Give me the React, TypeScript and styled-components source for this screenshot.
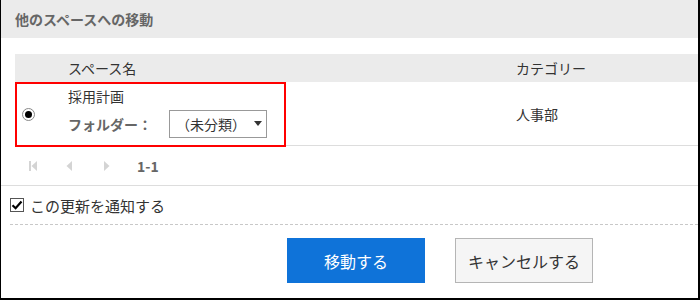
import React from "react";
import styled, { createGlobalStyle } from "styled-components";

const GlobalStyle = createGlobalStyle`
  * { box-sizing: border-box; }
  body {
    margin: 0;
    background: #fff;
    font-family: "Noto Sans CJK JP", "Noto Sans", sans-serif;
    color: #333;
  }
`;

const Frame = styled.div`
  width: 700px;
  height: 300px;
  border-left: 1px solid #000;
  border-right: 2px solid #000;
  border-bottom: 2px solid #000;
  background: #fff;
  display: flex;
  flex-direction: column;
`;

const Header = styled.h2`
  margin: 0;
  height: 38px;
  line-height: 38px;
  padding-left: 14px;
  background: #ebebeb;
  color: #666;
  font-size: 14px;
  font-weight: 700;
`;

const TableArea = styled.div`
  padding: 16px 0 0 14px;
`;

const Row = styled.div<{ $head?: boolean }>`
  position: relative;
  display: grid;
  grid-template-columns: 53px 448px 1fr;
  align-items: center;
  height: ${(p) => (p.$head ? "28px" : "64px")};
  background: ${(p) => (p.$head ? "#ebebeb" : "#fff")};
  border-bottom: ${(p) => (p.$head ? "none" : "1px solid #ddd")};
  font-size: 14px;
  color: #333;
`;

const Highlight = styled.div`
  position: absolute;
  left: 0;
  top: 0;
  width: 271px;
  height: 65px;
  border: 2px solid #f00;
  pointer-events: none;
`;

const RadioCell = styled.div`
  display: flex;
  padding-left: 7px;
  padding-top: 2px;
`;

const Radio = styled.span`
  width: 13px;
  height: 13px;
  border-radius: 50%;
  border: 1px solid #888;
  display: flex;
  align-items: center;
  justify-content: center;
  &::after {
    content: "";
    width: 7px;
    height: 7px;
    border-radius: 50%;
    background: #000;
  }
`;

const NameCell = styled.div`
  display: flex;
  flex-direction: column;
  gap: 4px;
  padding-bottom: 4px;
`;

const SpaceName = styled.div`
  font-size: 14px;
  line-height: 20px;
`;

const FolderLine = styled.div`
  display: flex;
  align-items: center;
`;

const FolderLabel = styled.span`
  font-weight: 700;
  color: #666;
  font-size: 14px;
  width: 101px;
`;

const Select = styled.div`
  width: 98px;
  height: 28px;
  border: 1px solid #999;
  display: flex;
  align-items: center;
  padding-left: 6px;
  gap: 8px;
  font-size: 14px;
  color: #333;
`;

const Caret = styled.span`
  width: 0;
  height: 0;
  border-left: 4px solid transparent;
  border-right: 4px solid transparent;
  border-top: 5px solid #333;
`;

const Pager = styled.div`
  display: flex;
  align-items: center;
  height: 39px;
  padding-left: 27px;
`;

const PageIcon = styled.svg`
  width: 10px;
  height: 12px;
  margin-right: 27px;
  fill: #d4d4d4;
`;

const PageCount = styled.span`
  font-weight: 700;
  color: #666;
  font-size: 14px;
  margin-left: -2px;
`;

const Divider = styled.div`
  border-top: 1px solid #ddd;
`;

const NotifyRow = styled.label`
  display: flex;
  align-items: center;
  gap: 6px;
  height: 38px;
  padding-left: 9px;
  font-size: 15px;
  color: #333;
`;

const CheckBox = styled.span`
  width: 14px;
  height: 14px;
  border: 1px solid #555;
  background: #fff;
  display: flex;
  align-items: center;
  justify-content: center;
`;

const Dashed = styled.div`
  margin-left: 9px;
  border-top: 1px dashed #c8c8c8;
`;

const Buttons = styled.div`
  display: flex;
  gap: 30px;
  padding: 13px 0 0 286px;
`;

const Button = styled.button<{ $primary?: boolean }>`
  width: 138px;
  height: 45px;
  font-family: inherit;
  font-size: 16px;
  border: 1px solid ${(p) => (p.$primary ? "#0f73d9" : "#b5b5b5")};
  background: ${(p) => (p.$primary ? "#0f73d9" : "#f5f5f5")};
  color: ${(p) => (p.$primary ? "#fff" : "#333")};
  padding: 0;
`;

export default function App() {
  return (
    <>
      <GlobalStyle />
      <Frame>
        <Header>他のスペースへの移動</Header>
        <TableArea>
          <Row $head>
            <span />
            <span>スペース名</span>
            <span>カテゴリー</span>
          </Row>
          <Row>
            <RadioCell>
              <Radio />
            </RadioCell>
            <NameCell>
              <SpaceName>採用計画</SpaceName>
              <FolderLine>
                <FolderLabel>フォルダー：</FolderLabel>
                <Select>
                  （未分類）
                  <Caret />
                </Select>
              </FolderLine>
            </NameCell>
            <span>人事部</span>
            <Highlight />
          </Row>
        </TableArea>
        <Pager>
          <PageIcon viewBox="0 0 10 12">
            <rect x="1" y="1" width="2" height="10" />
            <polygon points="9,1 3.5,6 9,11" />
          </PageIcon>
          <PageIcon viewBox="0 0 10 12">
            <polygon points="7,1 1.5,6 7,11" />
          </PageIcon>
          <PageIcon viewBox="0 0 10 12">
            <polygon points="2,1 7.5,6 2,11" />
          </PageIcon>
          <PageCount>1-1</PageCount>
        </Pager>
        <Divider />
        <NotifyRow>
          <CheckBox>
            <svg width="12" height="12" viewBox="0 0 12 12">
              <path d="M1.5 6.2 L4.6 9.2 L10.5 2.5" fill="none" stroke="#000" strokeWidth="2.2" />
            </svg>
          </CheckBox>
          この更新を通知する
        </NotifyRow>
        <Dashed />
        <Buttons>
          <Button $primary>移動する</Button>
          <Button>キャンセルする</Button>
        </Buttons>
      </Frame>
    </>
  );
}
